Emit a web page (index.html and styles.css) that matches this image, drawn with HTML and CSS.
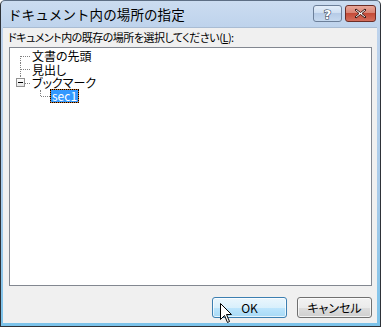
FILE: index.html
```html
<!DOCTYPE html>
<html lang="ja">
<head>
    <meta charset="UTF-8">
    <title>ドキュメント内の場所の指定</title>
    <link rel="stylesheet" href="styles.css">
</head>
<body>

    <div class="window">
        <div class="titlebar">
            <div class="title">ドキュメント内の場所の指定</div>
            <button class="cap-btn help-btn" title="ヘルプ">
                <svg width="13" height="13" viewBox="0 0 13 13">
                    <text x="6.5" y="11.5" text-anchor="middle" class="help-glyph">?</text>
                </svg>
            </button>
            <button class="cap-btn close-btn" title="閉じる">
                <svg width="13" height="11" viewBox="0 0 13 11">
                    <path d="M2 1 L6.5 4.5 L11 1 L12 2 L8 5.5 L12 9 L11 10 L6.5 6.5 L2 10 L1 9 L5 5.5 L1 2 Z" fill="#fff" stroke="#3b1a16" stroke-width="1" stroke-linejoin="round"/>
                </svg>
            </button>
        </div>

        <div class="client">
            <div class="prompt">ドキュメント内の既存の場所を選択してください(<u>L</u>):</div>

            <div class="tree">
                <div class="node first">
                    <span class="branch"></span>
                    <span class="label">文書の先頭</span>
                </div>
                <div class="node">
                    <span class="branch"></span>
                    <span class="label">見出し</span>
                </div>
                <div class="node last">
                    <span class="branch"><span class="expander"></span></span>
                    <span class="label">ブックマーク</span>
                </div>
                <div class="node child last">
                    <span class="indent"></span>
                    <span class="branch"></span>
                    <span class="label selected">sec1</span>
                </div>
            </div>

            <div class="actions">
                <button class="btn btn-default">OK</button>
                <button class="btn">キャンセル</button>
            </div>

            <svg class="cursor" width="13" height="21" viewBox="0 0 13 21">
                <path d="M0.5 0.5 L0.5 16.5 L4.5 12.5 L7.5 19.5 L9.5 18.5 L6.5 11.5 L11.5 11.5 Z" fill="#fff" stroke="#000" stroke-width="1" stroke-linejoin="miter"/>
            </svg>
        </div>
    </div>

</body>
</html>
```

FILE: styles.css
```css
* { box-sizing: border-box; }
body { margin: 0; font-family: "Noto Sans CJK JP", "Noto Sans", sans-serif; font-size: 12px; color: #000; }

.window { position: relative; width: 381px; height: 327px; border: 1px solid #2e3238; border-top-color: #5d6e84; border-radius: 5px 5px 0 0; padding: 0 3px 3px 2px; display: flex; flex-direction: column; background: linear-gradient(#cbdcf0, #bed3ec 26px, #a8cbea 60%, #7cc3ea); }

.titlebar { height: 26px; display: flex; align-items: flex-start; }
.title { flex: 1; padding: 4px 0 0 5px; font-size: 13.5px; letter-spacing: 0.1px; line-height: 18px; color: #000; }
.cap-btn { margin-top: 4px; height: 17px; padding: 0; border-radius: 3px; display: flex; align-items: center; justify-content: center; cursor: default; }
.help-btn { width: 29px; margin-right: 3px; border: 1px solid #6c7f99; background: linear-gradient(#e4eefa, #cfdff2 45%, #b6cbe6 50%, #c6d9ef); }
.close-btn { width: 31px; margin-right: 1px; border: 1px solid #6c2d26; background: linear-gradient(#e9a799, #d98474 45%, #c44b38 50%, #d46e5c); }
.help-glyph { font-family: "DejaVu Sans", sans-serif; font-weight: bold; font-size: 13px; fill: #fff; stroke: #3a4a60; stroke-width: 1.2px; paint-order: stroke; }

.client { position: relative; flex: 1; background: #f0f0f0; padding: 2px 5px 0 5px; border-top: 1px solid #a9bcd3; display: flex; flex-direction: column; }
.prompt { font-size: 11px; letter-spacing: -0.5px; line-height: 15px; font-feature-settings: "palt"; margin-bottom: 2px; }
.prompt u { text-underline-offset: 1px; }

.tree { margin-left: 1px; width: 363px; height: 239px; border: 1px solid #828790; background: #fff; padding-top: 1px; font-feature-settings: "palt"; }
.node { display: flex; align-items: center; height: 13.5px; }
.indent { width: 20px; }
.branch { position: relative; width: 20px; height: 100%; }
.branch::before { content: ""; position: absolute; left: 10px; top: 0; bottom: 0; border-left: 1px dotted #808080; }
.branch::after { content: ""; position: absolute; left: 11px; width: 9px; top: 50%; border-top: 1px dotted #808080; }
.node.first .branch::before { top: 50%; }
.node.last .branch::before { bottom: 50%; }
.expander { position: absolute; left: 6px; top: 2px; width: 9px; height: 9px; border: 1px solid #919191; background: linear-gradient(#fff, #e6e6e6); z-index: 1; }
.expander::after { content: ""; position: absolute; left: 1px; top: 3px; width: 5px; height: 1px; background: #000; }
.node.last:not(.child) .branch::after { left: 15px; width: 5px; }
.label { padding: 0 2px; line-height: 13px; white-space: nowrap; }
.label.selected { color: #fff; padding: 0 1px; height: 14px; line-height: 12px; border: 1px dotted #000; background: linear-gradient(#3399ff, #3399ff) padding-box, linear-gradient(#d07528, #d07528) border-box; }

.actions { display: flex; justify-content: flex-end; gap: 10px; margin-top: 11px; }
.btn { width: 75px; height: 21px; padding: 0; font-family: inherit; font-size: 12px; color: #000; border: 1px solid #707070; border-radius: 3px; background: linear-gradient(#f2f2f2, #ebebeb 50%, #dddddd 50%, #cfcfcf); box-shadow: inset 0 0 0 1px rgba(255,255,255,0.7); font-feature-settings: "palt"; }
.btn-default { border-color: #3c7fb1; background: linear-gradient(#eaf6fd, #d9f0fc 50%, #bee6fd 50%, #a7d9f5); }

.cursor { position: absolute; left: 217px; top: 275px; }
```
